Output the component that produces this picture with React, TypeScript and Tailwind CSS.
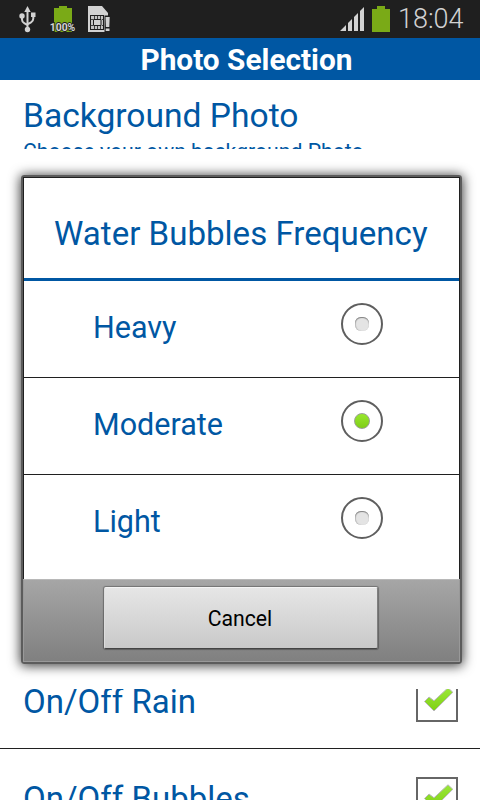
import clsx from "clsx";

type Frequency = {
  label: string;
  selected?: boolean;
};

const frequencies: Frequency[] = [
  { label: "Heavy" },
  { label: "Moderate", selected: true },
  { label: "Light" },
];

function StatusBar() {
  return (
    <div className="flex h-[38px] shrink-0 bg-[#1f1f1f] text-[#d2d2d2]">
      <svg className="ml-[19px] mt-[5px] h-7 w-[18px]" viewBox="0 0 18 28" fill="none" stroke="currentColor">
        <path d="M8.500 5v20M3 11v3.500q0 2.500 2.200 3.700l3.300 2M14.300 10v3.500q0 2.500-2.300 3.900l-3.500 2" strokeWidth="2" />
        <path d="M5.300 7 8.500 1l3.200 6z" fill="currentColor" stroke="none" />
        <circle cx="3" cy="11" r="2.700" fill="currentColor" stroke="none" />
        <path d="M12 7.500h4.500V12H12z" fill="currentColor" stroke="none" />
        <circle cx="8.500" cy="24.500" r="2.700" fill="currentColor" stroke="none" />
      </svg>
      <svg className="ml-[12px] mt-[5px] h-7 w-7" viewBox="0 0 28 28">
        <path d="M10 1h8v2h5v24H5V3h5z" fill="#7aaa17" />
        <text
          x="13.5"
          y="26"
          textAnchor="middle"
          textLength="25.5"
          lengthAdjust="spacingAndGlyphs"
          fontSize="11.2"
          fontWeight="700"
          fill="#d6d6d6"
          stroke="#1f1f1f"
          strokeWidth="1.8"
          paintOrder="stroke"
          className="font-[Roboto,sans-serif]"
        >
          100%
        </text>
      </svg>
      <svg className="ml-[10px] mt-[5px] h-7 w-6" viewBox="0 0 24 28">
        <path d="M1 1h14l6 7v7h-2.500v12H1z" fill="#d2d2d2" />
        <path d="M3 10h14v15H3z" fill="#1f1f1f" />
        <path d="M4 11h12v13H4z" fill="#c4c4c4" />
        <path
          d="M7.500 11v3M10.500 11v3M13.500 11v3M7.500 21v3M10.500 21v3M13.500 21v3M4 14.500h2M4 20.500h2M15 14.500h1M15 20.500h1"
          stroke="#1f1f1f"
          strokeWidth="0.800"
        />
        <path d="M6.500 14.500h7.500v6H6.500z" fill="#d2d2d2" stroke="#1f1f1f" />
        <path d="M17.500 10.500H24V28h-6.500z" fill="#1f1f1f" />
        <path d="M18.500 12h4.200l-.4 10h-3.400zM18.700 23.500h3.800V26h-3.800z" fill="#d2d2d2" />
      </svg>
      <svg className="ml-auto mt-[5px] h-[27px] w-[25px]" viewBox="0 0 25 27" fill="#d2d2d2">
        <path d="M0 26 6 20v6zM8 18l4-4v12H8zM14 12l4-4v18h-4zM20 6l4-4v24h-4z" />
      </svg>
      <svg className="ml-[7px] mt-[6px] h-[26px] w-[18px]" viewBox="0 0 18 26">
        <path d="M5 0h8v3h5v23H0V3h5z" fill="#7aaa17" />
      </svg>
      <span className="ml-[8px] mr-[15px] w-[67px] whitespace-nowrap text-[27px] font-light leading-[39px]">18:04</span>
    </div>
  );
}

function RadioMark({ selected }: { selected?: boolean }) {
  return (
    <span className="flex size-[42px] items-center justify-center rounded-full border-2 border-[#5f5f5f]">
      <span
        className={clsx(
          selected
            ? "size-4 rounded-full border border-[#9a9f95] bg-linear-to-b from-[#98e82c] to-[#7fcd18]"
            : "size-[14px] rounded-[6px] bg-[#e4e4e4] shadow-[inset_0_1px_1px_#808080,inset_1px_0_1px_#c0c0c0]",
        )}
      />
    </span>
  );
}

function CheckMark() {
  return (
    <span className="flex size-[42px] shrink-0 border-2 border-[#666]">
      <svg viewBox="0 0 38 38" className="size-[38px]">
        <defs>
          <linearGradient id="tick" x1="0" y1="0" x2="0" y2="1">
            <stop offset="0" stopColor="#9be83a" />
            <stop offset="1" stopColor="#7fd013" />
          </linearGradient>
        </defs>
        <path
          d="M6.500 19.500 11 15 16 18.800 30 5.800 34.800 10.300 16 29z"
          fill="url(#tick)"
          stroke="#b8b8b8"
          strokeLinejoin="round"
        />
      </svg>
    </span>
  );
}

export default function App() {
  return (
    <div className="flex h-[800px] w-[480px] flex-col overflow-hidden bg-white font-[Roboto,sans-serif] text-[#0057a3]">
      <StatusBar />
      <h1 className="h-[42px] shrink-0 bg-[#0057a3] pl-[13px] text-center text-[29.800px] font-bold leading-[44px] text-white">
        Photo Selection
      </h1>

      <section className="h-[69px] shrink-0 overflow-hidden whitespace-nowrap px-[23px] pt-[14px]">
        <h2 className="text-[33.600px] leading-[44px]">Background Photo</h2>
        <p className="text-[21.200px] leading-[28px]">Choose your own background Photo</p>
      </section>

      <div className="flex h-[540px] shrink-0 pl-[21px] pt-[26px]">
        <div className="flex h-[489px] w-[441px] flex-col rounded-[3px] border-2 border-[#5c5c5c] shadow-[0_1px_12px_1px_rgba(0,0,0,0.75)]">
          <div className="flex h-[402px] flex-col border-x border-t border-[#202020] bg-white">
            <h2 className="h-[103px] shrink-0 whitespace-nowrap border-b-3 border-[#0057a3] pl-[30px] pt-[34px] text-[33.100px] leading-[44px]">
              Water Bubbles Frequency
            </h2>
            {frequencies.map((o, idx) => (
              <div
                key={idx}
                className={clsx(
                  "flex h-[97px] items-start justify-between pl-[69px] pr-[76px] pt-[22px]",
                  idx < frequencies.length - 1 && "border-b border-[#202020]",
                )}
              >
                <span className="text-[30.500px] leading-[50px]">{o.label}</span>
                <RadioMark selected={o.selected} />
              </div>
            ))}
          </div>
          <div className="flex h-[83px] shrink-0 justify-center border border-[#999] border-t-[#b8b8b8] bg-linear-to-b from-[#a6a6a6] to-[#808080] pt-[7px] pr-[1px]">
            <button className="h-[62px] w-[274px] rounded-[2px] border border-t-[#f4f4f4] border-r-[#808080] border-b-[#444] border-l-[#ddd] bg-linear-to-b from-[#e6e6e6] to-[#c9c9c9] pr-[2px] pt-[2px] text-[21.200px] text-black shadow-[0_0_1px_1px_rgba(0,0,0,0.3)]">
              Cancel
            </button>
          </div>
        </div>
      </div>

      <section className="flex h-[111px] shrink-0 flex-col justify-start overflow-hidden">
        <div className="flex h-[60px] shrink-0 items-end justify-between overflow-hidden border-b border-[#202020] pb-[26px] pl-[23px] pr-[22px]">
          <span className="-mb-[2px] text-[33px] leading-[44px]">On/Off Rain</span>
          <CheckMark />
        </div>
        <div className="flex h-[97px] shrink-0 items-start justify-between pl-[23px] pr-[22px] pt-[28px]">
          <span className="text-[33px] leading-[44px]">On/Off Bubbles</span>
          <CheckMark />
        </div>
      </section>
    </div>
  );
}
